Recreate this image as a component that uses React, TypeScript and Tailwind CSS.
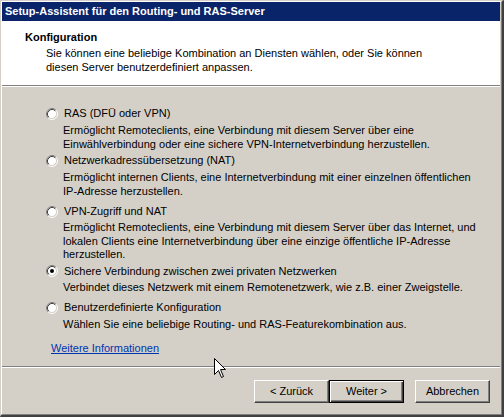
import React from 'react';

type Option = {
  label: string;
  lines: string[];
  checked?: boolean;
  mt: string;
  descMt: string;
};

const options: Option[] = [
  {
    label: 'RAS (DFÜ oder VPN)',
    lines: [
      'Ermöglicht Remoteclients, eine Verbindung mit diesem Server über eine',
      'Einwählverbindung oder eine sichere VPN-Internetverbindung herzustellen.',
    ],
    mt: 'mt-0',
    descMt: 'mt-[4px]',
  },
  {
    label: 'Netzwerkadressübersetzung (NAT)',
    lines: [
      'Ermöglicht internen Clients, eine Internetverbindung mit einer einzelnen öffentlichen',
      'IP-Adresse herzustellen.',
    ],
    mt: 'mt-[3px]',
    descMt: 'mt-[4px]',
  },
  {
    label: 'VPN-Zugriff und NAT',
    lines: [
      'Ermöglicht Remoteclients, eine Verbindung mit diesem Server über das Internet, und',
      'lokalen Clients eine Internetverbindung über eine einzige öffentliche IP-Adresse',
      'herzustellen.',
    ],
    mt: 'mt-[7px]',
    descMt: 'mt-[3px]',
  },
  {
    label: 'Sichere Verbindung zwischen zwei privaten Netzwerken',
    lines: ['Verbindet dieses Netzwerk mit einem Remotenetzwerk, wie z.B. einer Zweigstelle.'],
    checked: true,
    mt: 'mt-[3px]',
    descMt: 'mt-[3px]',
  },
  {
    label: 'Benutzerdefinierte Konfiguration',
    lines: ['Wählen Sie eine beliebige Routing- und RAS-Featurekombination aus.'],
    mt: 'mt-[7px]',
    descMt: 'mt-[4px]',
  },
];

function Radio({ checked }: { checked?: boolean }) {
  return (
    <svg width="12" height="12" viewBox="0 0 12 12" className="shrink-0" aria-hidden="true">
      <circle cx="6" cy="6" r="4.5" fill="#fff" />
      <path d="M2.11 9.89A5.5 5.5 0 0 1 9.89 2.11" fill="none" stroke="#808080" />
      <path d="M9.89 2.11A5.5 5.5 0 0 1 2.11 9.89" fill="none" stroke="#fff" />
      <path d="M2.82 9.18A4.5 4.5 0 0 1 9.18 2.82" fill="none" stroke="#404040" />
      <path d="M9.18 2.82A4.5 4.5 0 0 1 2.82 9.18" fill="none" stroke="#d4d0c8" />
      {checked && <circle cx="6" cy="6" r="2" fill="#000" />}
    </svg>
  );
}

function Button({ children, isDefault }: { children: React.ReactNode; isDefault?: boolean }) {
  return isDefault ? (
    <button className="w-[75px] h-[23px] border border-black bg-[#d4d0c8] text-[11px] text-black shadow-[inset_1px_1px_#fff,inset_-1px_-1px_#404040,inset_-2px_-2px_#808080]">
      {children}
    </button>
  ) : (
    <button className="w-[75px] h-[23px] border border-t-white border-l-white border-r-[#404040] border-b-[#404040] bg-[#d4d0c8] text-[11px] text-black shadow-[inset_-1px_-1px_#808080]">
      {children}
    </button>
  );
}

export default function App() {
  return (
    <div className="relative w-[504px] h-[417px] font-[Liberation_Sans,Arial,sans-serif] text-black select-none">
      <div className="h-full border-t border-l border-[#d4d0c8] border-r-2 border-b-2 border-r-[#404040] border-b-[#404040]">
        <div className="h-full border-t border-l border-white border-r border-b border-r-[#808080] border-b-[#808080]">
          <div className="h-full flex flex-col bg-[#d4d0c8] pr-px pb-px">
            {/* Title bar */}
            <div className="h-[19px] shrink-0 bg-[#0a246a] pl-[3px] flex items-center">
              <span className="text-white font-bold text-[11px] leading-[13px]">
                Setup-Assistent für den Routing- und RAS-Server
              </span>
            </div>

            {/* Header */}
            <div className="h-[64px] shrink-0 bg-white pt-[10px] pl-[23px]">
              <div className="font-bold text-[11px] leading-[13px]">Konfiguration</div>
              <div className="mt-[2px] pl-[21px] text-[11px] leading-[14px]">
                <div>Sie können eine beliebige Kombination an Diensten wählen, oder Sie können</div>
                <div>diesen Server benutzerdefiniert anpassen.</div>
              </div>
            </div>
            <div className="h-px bg-[#808080] shrink-0" />
            <div className="h-px bg-white shrink-0" />

            {/* Options */}
            <div className="h-[279px] shrink-0 pt-[20px] text-[11px]">
              {options.map((o) => (
                <div key={o.label} className={o.mt}>
                  <div className="h-[13px] flex items-center pl-[44px]">
                    <Radio checked={o.checked} />
                    <span className="ml-[6px] leading-[13px]">{o.label}</span>
                  </div>
                  <div className={`${o.descMt} pl-[61px] leading-[13.5px]`}>
                    {o.lines.map((l) => (
                      <div key={l}>{l}</div>
                    ))}
                  </div>
                </div>
              ))}
              <div className="mt-[10px] pl-[49px] leading-[13px]">
                <span className="text-[#0033b0] underline">Weitere Informationen</span>
              </div>
            </div>

            <div className="h-px bg-[#808080] shrink-0" />
            <div className="h-px bg-white shrink-0" />

            {/* Buttons */}
            <div className="flex justify-end pt-[12px] pr-[10px]">
              <Button>&lt; Zurück</Button>
              <Button isDefault>Weiter &gt;</Button>
              <div className="w-[11px]" />
              <Button>Abbrechen</Button>
            </div>
          </div>
        </div>
      </div>

      {/* Mouse pointer */}
      <svg className="absolute left-[214px] top-[358px]" width="13" height="21" viewBox="0 0 13 21" aria-hidden="true">
        <path
          d="M0.5 0.5V16.5L4.5 12.5L7.5 19.5L9.5 18.5L6.5 11.5H11.5Z"
          fill="#fff"
          stroke="#000"
          strokeLinejoin="miter"
        />
      </svg>
    </div>
  );
}
